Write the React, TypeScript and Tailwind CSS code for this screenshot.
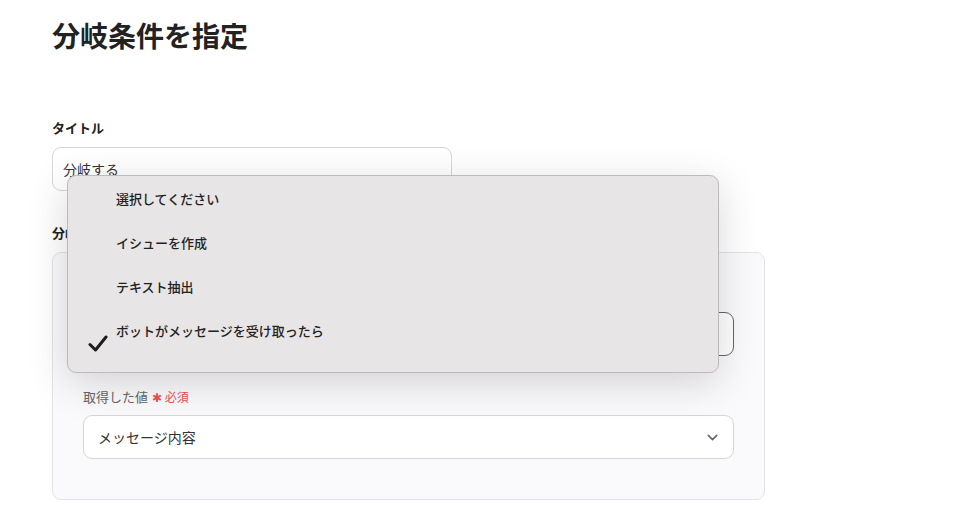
import { ChevronDown } from 'lucide-react';

const options = ['選択してください', 'イシューを作成', 'テキスト抽出', 'ボットがメッセージを受け取ったら'];

function Required() {
  return <span className="ml-1 text-[12px] text-[#f0504f]">✱ 必須</span>;
}

export default function App() {
  return (
    <div
      className="relative min-h-[516px] w-[956px] bg-white px-[52px] pt-[15px] text-[#222]"
      style={{ fontFamily: '"Noto Sans CJK JP", "Noto Sans", sans-serif' }}
    >
      <h1 className="text-[28px] font-bold leading-[40px] text-[#222]">分岐条件を指定</h1>

      <div className="mt-[63px] text-[13px] font-bold leading-[20px]">タイトル</div>
      <div className="mt-[9px] flex h-[44px] w-[400px] items-center rounded-[9px] border border-[#d6d5dc] bg-white px-[10px] text-[14px] text-[#333]">
        分岐する
      </div>

      <div className="mt-[32px] text-[13px] font-bold leading-[20px]">分岐条件</div>
      <div className="mt-[9px] w-[713px] rounded-[9px] border border-[#e4e3e8] bg-[#faf9fb] px-[30px] pb-[40px] pt-[59px]">
        {/* trigger select, mostly hidden behind the open menu */}
        <div className="flex h-[44px] items-center justify-end rounded-[9px] border border-[#666] bg-white px-[14px]">
          <ChevronDown size={16} className="text-[#666]" />
        </div>

        <div className="mt-[31px] text-[13px] leading-[20px] text-[#666]">
          取得した値
          <Required />
        </div>
        <div className="mt-[8px] flex h-[44px] items-center justify-between rounded-[9px] border border-[#d6d5dc] bg-white pl-[14px] pr-[12px] text-[14px] text-[#333]">
          メッセージ内容
          <ChevronDown size={17} strokeWidth={2.2} className="text-[#666]" />
        </div>
      </div>

      <div className="absolute left-[67px] top-[175px] h-[198px] w-[652px] rounded-[9px] border border-[#bdbabb] bg-[#e8e5e6] pt-[1px] shadow-[0_10px_40px_rgba(0,0,0,0.16)]">
        {options.map((o, i) => (
          <div key={o} className="relative flex h-[44px] items-center pl-[48px] text-[13px] font-medium text-[#222]">
            {i === options.length - 1 && (
              <svg className="absolute left-[20px] top-[26px]" width="20" height="17" viewBox="0 0 20 17">
                <path d="M2 9.5 L7.5 15 L18 2" fill="none" stroke="#1d1d1d" strokeWidth="3" strokeLinecap="round" strokeLinejoin="round" />
              </svg>
            )}
            {o}
          </div>
        ))}
      </div>
    </div>
  );
}
